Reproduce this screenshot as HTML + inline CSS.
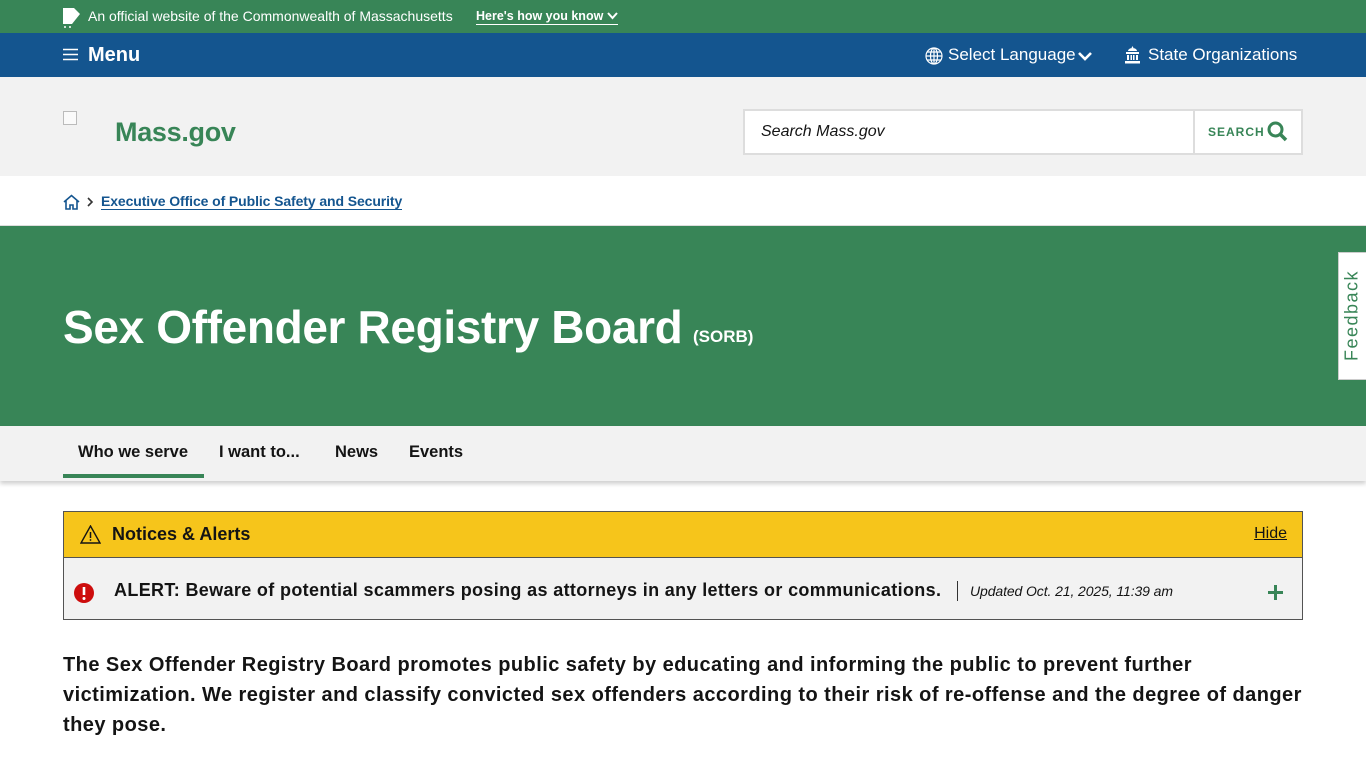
<!DOCTYPE html>
<html><head><meta charset="utf-8"><style>
*{box-sizing:border-box;margin:0;padding:0}
body{width:1366px;height:768px;overflow:hidden;font-family:"Liberation Sans",sans-serif;background:#fff;color:#141414;position:relative}
.top{height:33px;background:#388557;color:#fff;font-size:14px;position:relative}
.top .t{position:absolute;left:88px;top:8px}
.top .k{position:absolute;left:476px;top:9px;font-weight:bold;font-size:12.5px;border-bottom:1.5px solid #fff;padding-bottom:1px}
.nav{height:44px;background:#14558f;color:#fff;position:relative}
.hdr{height:99px;background:#f2f2f2;position:relative}
.bc{height:50px;position:relative;border-bottom:1px solid #ddd}
.hero{height:200px;background:#388557;position:relative;color:#fff}
.tabs{height:55px;background:#f2f2f2;position:relative;box-shadow:0 3px 4px rgba(0,0,0,.18)}
.tabs span{position:absolute;top:17px;font-weight:bold;font-size:16.5px}
.box{position:absolute;left:63px;top:511px;width:1240px;height:109px;border:1px solid #535353}
</style></head><body>
<div class="top">
<svg style="position:absolute;left:63px;top:8px" width="17" height="20" viewBox="0 0 17 20"><path d="M0 0h11l6 6-8 10H0z" fill="#fff"/><circle cx="2" cy="19" r="1" fill="#fff"/><circle cx="7" cy="19" r="1" fill="#fff"/></svg>
<span class="t">An official website of the Commonwealth of Massachusetts</span>
<span class="k">Here's how you know <svg width="11" height="8" viewBox="0 0 11 8"><path d="M1 1l4.5 5L10 1" stroke="#fff" stroke-width="2" fill="none"/></svg></span>
</div>
<div class="nav">
<svg style="position:absolute;left:63px;top:15px" width="15" height="13"><path d="M0 1.5h15M0 6.5h15M0 11.5h15" stroke="#fff" stroke-width="1.6"/></svg>
<span style="position:absolute;left:88px;top:11px;font-weight:bold;font-size:20px">Menu</span>
<svg style="position:absolute;left:925px;top:14px" width="18" height="18" viewBox="0 0 18 18" fill="none" stroke="#fff" stroke-width="1.2"><circle cx="9" cy="9" r="8"/><ellipse cx="9" cy="9" rx="3.5" ry="8"/><path d="M1 9h16M2.5 5h13M2.5 13h13M9 1v16"/></svg>
<span style="position:absolute;left:948px;top:12px;font-size:17px">Select Language</span>
<svg style="position:absolute;left:1078px;top:19px" width="14" height="9" viewBox="0 0 14 9"><path d="M1 1l6 6 6-6" stroke="#fff" stroke-width="2.6" fill="none"/></svg>
<svg style="position:absolute;left:1124px;top:13px" width="17" height="18" viewBox="0 0 17 18" fill="#fff"><path d="M8.5 0l1 2h-2zM4 5a4.5 3 0 0 1 9 0zM2 6h13v2H2zM3 9h2v5H3zM6.5 9h1.5v5H6.5zM9 9h1.5v5H9zM12 9h2v5h-2zM1 15h15v2.5H1z"/></svg>
<span style="position:absolute;left:1148px;top:12px;font-size:17px">State Organizations</span>
</div>
<div class="hdr">
<span style="position:absolute;left:115px;top:40px;font-size:27px;color:#388557;font-weight:bold;letter-spacing:-.3px">Mass.gov</span>
<div style="position:absolute;left:63px;top:34px;width:14px;height:14px;border:1px solid #bbb;background:#fafafa"></div>
<div style="position:absolute;left:743px;top:32px;width:560px;height:46px;background:#fff;border:2px solid #ddd">
<span style="position:absolute;left:16px;top:12px;font-style:italic;font-size:16px;color:#141414">Search Mass.gov</span>
<div style="position:absolute;left:448px;top:0;width:2px;height:42px;background:#ddd"></div>
<span style="position:absolute;left:463px;top:14px;font-size:12px;font-weight:bold;letter-spacing:1px;color:#388557">SEARCH</span>
<svg style="position:absolute;left:522px;top:10px" width="21" height="21" viewBox="0 0 21 21"><circle cx="8.5" cy="8.5" r="6.5" stroke="#388557" stroke-width="3" fill="none"/><path d="M13 13l6 6" stroke="#388557" stroke-width="3.5"/></svg>
</div>
</div>
<div class="bc">
<svg style="position:absolute;left:63px;top:18px" width="17" height="16" viewBox="0 0 17 16" fill="none" stroke="#14558f" stroke-width="1.6"><path d="M1 8l7.5-6.5L16 8M3 6.5V15h4v-4h3v4h4V6.5"/></svg>
<svg style="position:absolute;left:87px;top:21px" width="7" height="10"><path d="M1 1l4 4-4 4" stroke="#333" stroke-width="1.6" fill="none"/></svg>
<span style="position:absolute;left:101px;top:17px;font-size:14px;font-weight:bold;color:#14558f;border-bottom:1.5px solid #14558f;letter-spacing:-.1px">Executive Office of Public Safety and Security</span>
</div>
<div class="hero">
<span style="position:absolute;left:63px;top:74px;font-size:46px;font-weight:bold;letter-spacing:-.35px">Sex Offender Registry Board</span>
<span style="position:absolute;left:693px;top:101px;font-size:17px;font-weight:bold">(SORB)</span>
</div>
<div style="position:absolute;left:1338px;top:252px;width:28px;height:128px;background:#fff;border:1px solid #ccc;border-right:0">
<span style="position:absolute;left:-39px;top:52px;width:104px;transform:rotate(-90deg);font-size:18px;letter-spacing:1.5px;color:#388557;text-align:center">Feedback</span>
</div>
<div class="tabs">
<span style="left:78px">Who we serve</span>
<div style="position:absolute;left:63px;top:48px;width:141px;height:4px;background:#388557"></div>
<span style="left:219px">I want to...</span>
<span style="left:335px">News</span>
<span style="left:409px">Events</span>
</div>
<div class="box">
<div style="height:46px;background:#f6c51b;border-bottom:1px solid #535353;position:relative">
<svg style="position:absolute;left:16px;top:13px" width="21" height="19" viewBox="0 0 21 19"><path d="M10.5 1L20 18H1z" stroke="#141414" stroke-width="1.4" fill="none"/><path d="M10.5 7v6" stroke="#141414" stroke-width="1.5"/><circle cx="10.5" cy="15" r=".9" fill="#141414"/></svg>
<span style="position:absolute;left:48px;top:12px;font-size:18px;font-weight:bold">Notices &amp; Alerts</span>
<span style="position:absolute;right:15px;top:13px;font-size:16px;text-decoration:underline">Hide</span>
</div>
<div style="height:61px;background:#f2f2f2;position:relative">
<svg style="position:absolute;left:10px;top:25px" width="20" height="20"><circle cx="10" cy="10" r="10" fill="#cd0d0d"/><path d="M10 4v8" stroke="#fff" stroke-width="2.6"/><circle cx="10" cy="15.5" r="1.5" fill="#fff"/></svg>
<span style="position:absolute;left:50px;top:22px;font-size:18px;font-weight:bold;letter-spacing:.35px">ALERT: Beware of potential scammers posing as attorneys in any letters or communications.</span>
<div style="position:absolute;left:893px;top:23px;width:1px;height:20px;background:#333"></div>
<span style="position:absolute;left:906px;top:25px;font-size:14px;font-style:italic;letter-spacing:-.1px">Updated Oct. 21, 2025, 11:39 am</span>
<svg style="position:absolute;left:1204px;top:27px" width="15" height="15"><path d="M7.5 0v15M0 7.5h15" stroke="#388557" stroke-width="3"/></svg>
</div>
</div>
<p style="position:absolute;left:63px;top:650px;width:1300px;font-size:20px;font-weight:bold;line-height:30px;letter-spacing:.45px;white-space:nowrap">The Sex Offender Registry Board promotes public safety by educating and informing the public to prevent further<br>victimization. We register and classify convicted sex offenders according to their risk of re-offense and the degree of danger<br>they pose.</p>
</body></html>
